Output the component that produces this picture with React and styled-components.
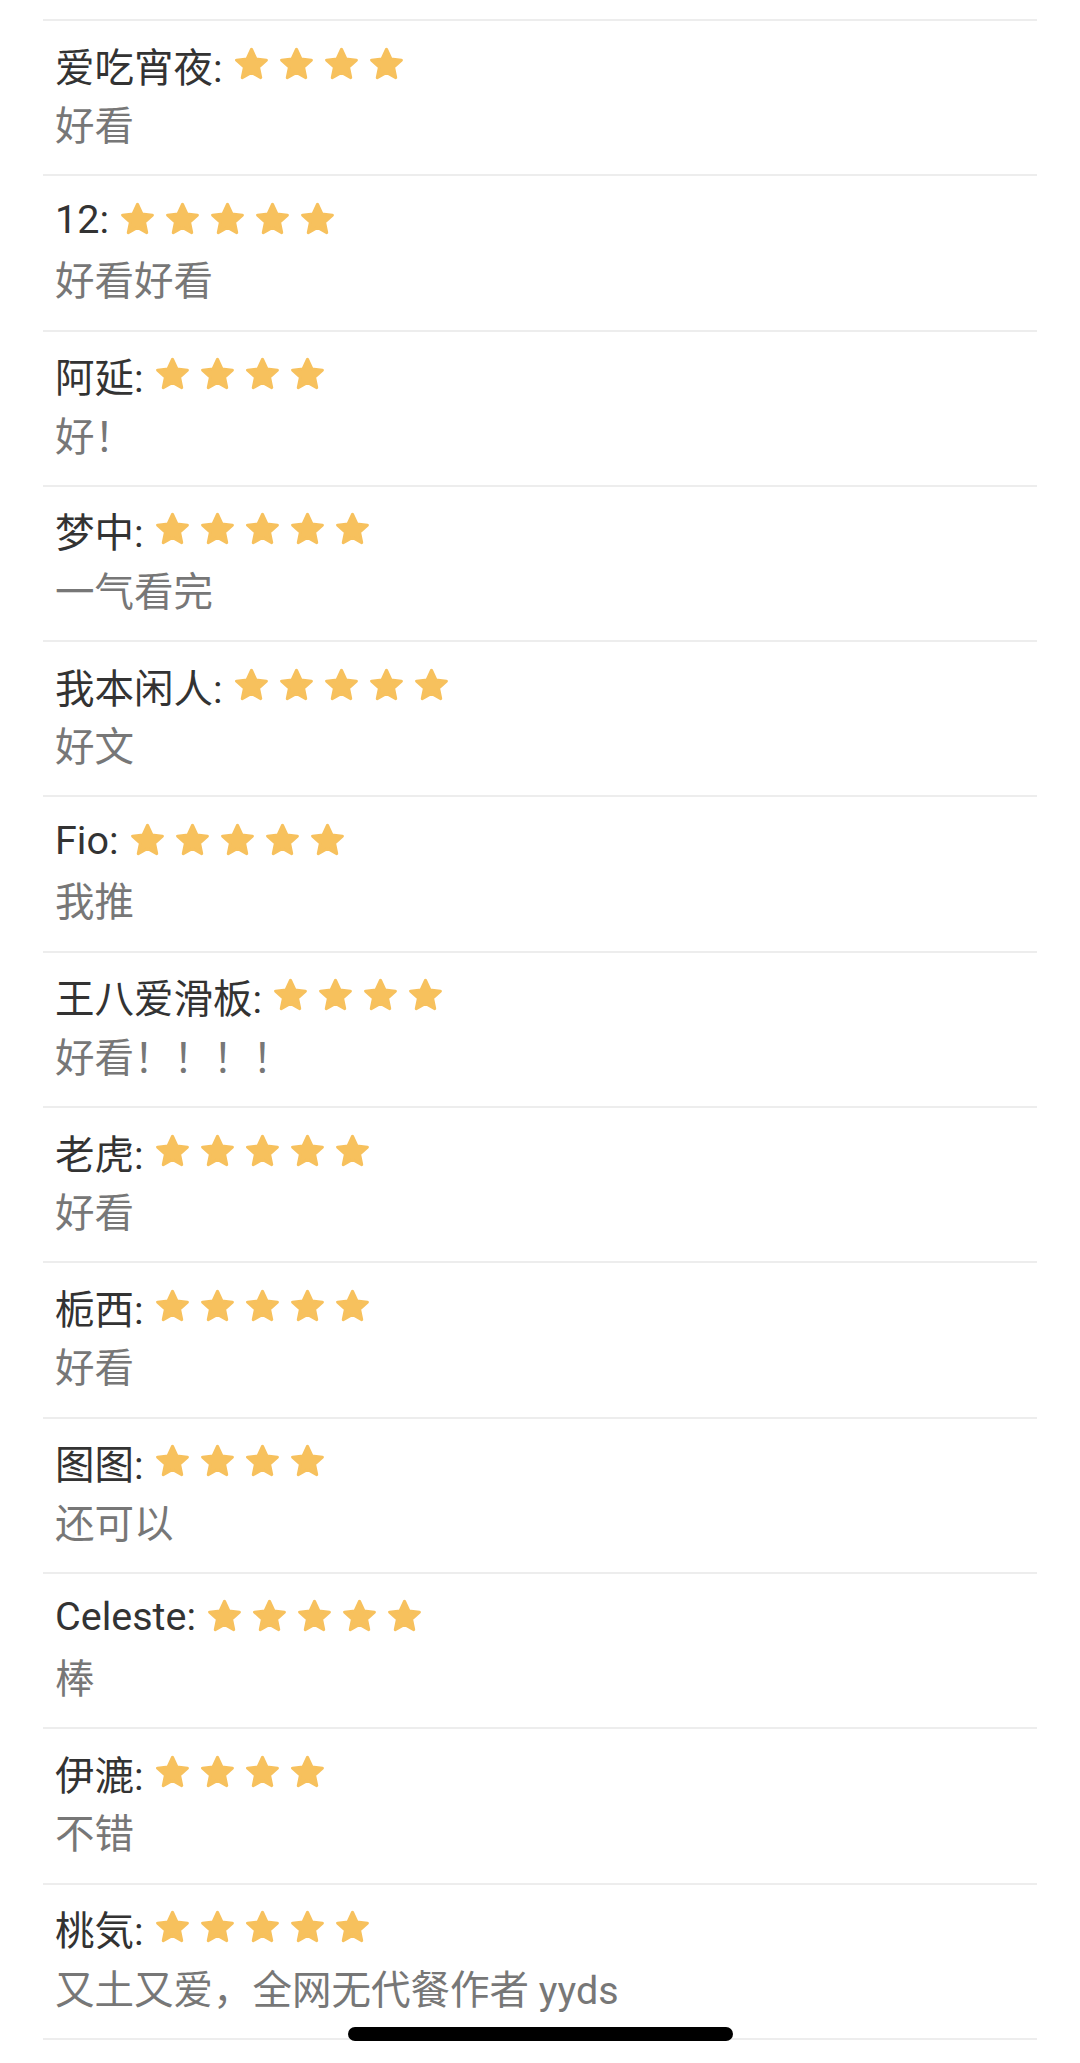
import React from "react";
import styled, { createGlobalStyle } from "styled-components";

const GlobalStyle = createGlobalStyle`
  html, body { margin: 0; padding: 0; background: #ffffff; }
  body {
    font-family: "Roboto", "Noto Sans CJK SC", "Noto Sans CJK JP", sans-serif;
    -webkit-font-smoothing: antialiased;
  }
`;

const Page = styled.div`
  padding: 19px 43px 24px;
  min-height: 2063px;
  box-sizing: border-box;
`;

const List = styled.ul`
  list-style: none;
  margin: 0;
  padding: 0;
  border-top: 2px solid #ededed;
`;

const Item = styled.li`
  height: 155.3px;
  box-sizing: border-box;
  border-bottom: 2px solid #ededed;
  padding: 15px 12px 0;
  display: flex;
  flex-direction: column;
  gap: 7px;
`;

const NameRow = styled.div`
  display: flex;
  align-items: center;
  height: 56px;
  font-size: 39.5px;
  color: #333333;
  white-space: nowrap;
`;

const Name = styled.span`
  margin-right: 9px;
`;

const Stars = styled.span`
  display: inline-flex;
  gap: 6px;
  align-items: center;
`;

const Comment = styled.div`
  height: 56px;
  line-height: 56px;
  font-size: 39.5px;
  color: #777777;
  white-space: nowrap;
`;

const HomeBar = styled.div`
  position: fixed;
  left: 50%;
  bottom: 22px;
  width: 385px;
  height: 14px;
  margin-left: -192px;
  border-radius: 7px;
  background: #000000;
`;

const Star = () => (
  <svg width="39" height="39" viewBox="0 0 24 24" aria-hidden="true">
    <polygon
      points="12,2.6 14.75,8.6 21.2,9.3 16.4,13.7 17.7,20.1 12,16.9 6.3,20.1 7.6,13.7 2.8,9.3 9.25,8.6"
      fill="#F7C15D"
      stroke="#F7C15D"
      strokeWidth="1.8"
      strokeLinejoin="round"
    />
  </svg>
);

const reviews = [
  { name: "爱吃宵夜", stars: 4, text: "好看" },
  { name: "12", stars: 5, text: "好看好看" },
  { name: "阿延", stars: 4, text: "好！" },
  { name: "梦中", stars: 5, text: "一气看完" },
  { name: "我本闲人", stars: 5, text: "好文" },
  { name: "Fio", stars: 5, text: "我推" },
  { name: "王八爱滑板", stars: 4, text: "好看！！！！" },
  { name: "老虎", stars: 5, text: "好看" },
  { name: "栀西", stars: 5, text: "好看" },
  { name: "图图", stars: 4, text: "还可以" },
  { name: "Celeste", stars: 5, text: "棒" },
  { name: "伊漉", stars: 4, text: "不错" },
  { name: "桃気", stars: 5, text: "又土又爱，全网无代餐作者 yyds" },
];

export default function App() {
  return (
    <>
      <GlobalStyle />
      <Page>
        <List>
          {reviews.map((r, i) => (
            <Item key={i}>
              <NameRow>
                <Name>{r.name}:</Name>
                <Stars>
                  {Array.from({ length: r.stars }).map((_, j) => (
                    <Star key={j} />
                  ))}
                </Stars>
              </NameRow>
              <Comment>{r.text}</Comment>
            </Item>
          ))}
        </List>
      </Page>
      <HomeBar />
    </>
  );
}
